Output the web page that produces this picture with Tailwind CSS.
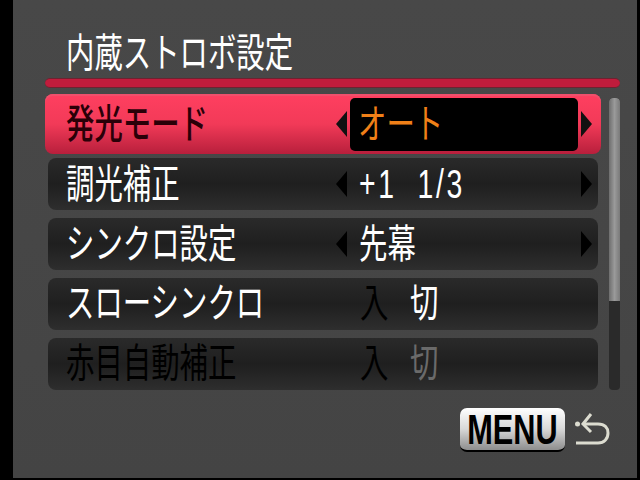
<!DOCTYPE html>
<html lang="ja">
<head>
<meta charset="UTF-8">
<title>内蔵ストロボ設定</title>
<script src="https://cdn.jsdelivr.net/npm/@tailwindcss/browser@4"></script>
</head>
<body class="bg-black w-[640px] h-[480px] overflow-hidden font-['Liberation_Sans','Noto_Sans_CJK_JP',sans-serif]">
<div class="ml-[13px] mr-[3px] h-[478px] bg-gradient-to-b from-[#484848] to-[#444444] flex flex-col pl-[32px] pr-[17px]">

  <!-- title -->
  <div class="h-[78px] pl-[21px] pt-[31px] text-[28.4px] leading-[44px] text-white shrink-0 whitespace-nowrap">
    <span class="inline-block origin-left scale-y-[1.42]">内蔵ストロボ設定</span>
  </div>
  <div class="h-[10px] rounded-full bg-[#c01c3c] border-y border-[#6e2230] shrink-0"></div>

  <div class="flex mt-[6px]">
    <!-- rows -->
    <div class="w-[557px] flex flex-col">
      <!-- selected -->
      <div class="h-[60px] rounded-[8px] shadow-[inset_0_2px_0_#f0506c] bg-gradient-to-b from-[#ff3f60] via-[#f23a58] to-[#b81f3c] flex items-center pl-[21px] relative">
        <span class="w-[270px] text-[#2a0008] text-[28.4px] inline-block origin-left scale-y-[1.42] font-medium whitespace-nowrap">発光モード</span>
        <svg class="w-[11px] h-[26px] text-[#111]" viewBox="0 0 11 26"><path fill="currentColor" d="M11 0V26L0 13Z"/></svg>
        <div class="ml-[3px] w-[228px] h-[53px] bg-black rounded-[5px] flex items-center pl-[8px] text-[#f08018] text-[28.4px]">
          <span class="inline-block origin-left scale-y-[1.42]">オート</span>
        </div>
        <svg class="ml-[3px] w-[11px] h-[26px] text-[#111]" viewBox="0 0 11 26"><path fill="currentColor" d="M0 0V26L11 13Z"/></svg>
      </div>

      <div class="mt-[4px] ml-[3px] w-[550px] h-[52px] rounded-[8px] bg-gradient-to-b from-[#2a2a2a] via-[#1f1f1f] to-[#2e2e2e] flex items-center pl-[18px] text-white text-[28.4px]">
        <span class="w-[270px] inline-block origin-left scale-y-[1.42] whitespace-nowrap">調光補正</span>
        <svg class="w-[11px] h-[26px] text-black" viewBox="0 0 11 26"><path fill="currentColor" d="M11 0V26L0 13Z"/></svg>
        <span class="w-[228px] ml-[3px] pl-[9px] inline-block origin-left scale-y-[1.42] tracking-[2.6px] whitespace-pre">+1  1/3</span>
        <svg class="ml-[3px] w-[11px] h-[26px] text-black" viewBox="0 0 11 26"><path fill="currentColor" d="M0 0V26L11 13Z"/></svg>
      </div>

      <div class="mt-[8px] ml-[3px] w-[550px] h-[52px] rounded-[8px] bg-gradient-to-b from-[#2a2a2a] via-[#1f1f1f] to-[#2e2e2e] flex items-center pl-[18px] text-white text-[28.4px]">
        <span class="w-[270px] inline-block origin-left scale-y-[1.42] whitespace-nowrap">シンクロ設定</span>
        <svg class="w-[11px] h-[26px] text-black" viewBox="0 0 11 26"><path fill="currentColor" d="M11 0V26L0 13Z"/></svg>
        <span class="w-[228px] ml-[3px] pl-[9px] inline-block origin-left scale-y-[1.42]">先幕</span>
        <svg class="ml-[3px] w-[11px] h-[26px] text-black" viewBox="0 0 11 26"><path fill="currentColor" d="M0 0V26L11 13Z"/></svg>
      </div>

      <div class="mt-[8px] ml-[3px] w-[550px] h-[52px] pb-[2px] rounded-[8px] bg-gradient-to-b from-[#2a2a2a] via-[#1f1f1f] to-[#2e2e2e] flex items-center pl-[18px] text-white text-[28.4px]">
        <span class="w-[294px] inline-block origin-left scale-y-[1.42] whitespace-nowrap">スローシンクロ</span>
        <span class="w-[50px] text-black inline-block origin-left scale-y-[1.42]">入</span>
        <span class="inline-block origin-left scale-y-[1.42]">切</span>
      </div>

      <div class="mt-[8px] ml-[3px] w-[550px] h-[52px] pb-[2px] rounded-[8px] bg-gradient-to-b from-[#2a2a2a] via-[#1f1f1f] to-[#2e2e2e] flex items-center pl-[18px] text-black text-[28.4px]">
        <span class="w-[294px] inline-block origin-left scale-y-[1.42] whitespace-nowrap">赤目自動補正</span>
        <span class="w-[50px] inline-block origin-left scale-y-[1.42]">入</span>
        <span class="text-[#6a6a6a] inline-block origin-left scale-y-[1.42]">切</span>
      </div>
    </div>

    <!-- scrollbar -->
    <div class="ml-[8px] mt-[4px] w-[11px] h-[292px] rounded-[4px] bg-[#2a2a2a] overflow-hidden">
      <div class="h-[203px] rounded-t-[3px] bg-gradient-to-r from-[#6e6e6e] via-[#9a9a9a] to-[#7a7a7a]"></div>
    </div>
  </div>

  <!-- menu -->
  <div class="flex justify-end items-center mt-[18px] pr-[10px]">
    <div class="w-[105px] h-[44px] rounded-[7px] border-b-2 border-black bg-gradient-to-b from-white via-[#d8d8d8] to-[#8e8e8e] flex items-center justify-center text-black font-bold text-[37px] leading-none">
      <span class="inline-block scale-x-[0.83] scale-y-[1.16] whitespace-nowrap">MENU</span>
    </div>
    <svg class="ml-[9px] w-[36px] h-[36px] text-[#dcdcd0]" viewBox="0 0 36 36" fill="none" stroke="currentColor" stroke-width="3">
      <circle cx="3.5" cy="12" r="2.5" fill="currentColor" stroke="none"/>
      <path d="M9 12H24C31 12 34 16 34 21C34 27 30 31 24 31H2"/>
      <path d="M17 2L9 12L17 20"/>
    </svg>
  </div>
</div>
</body>
</html>
